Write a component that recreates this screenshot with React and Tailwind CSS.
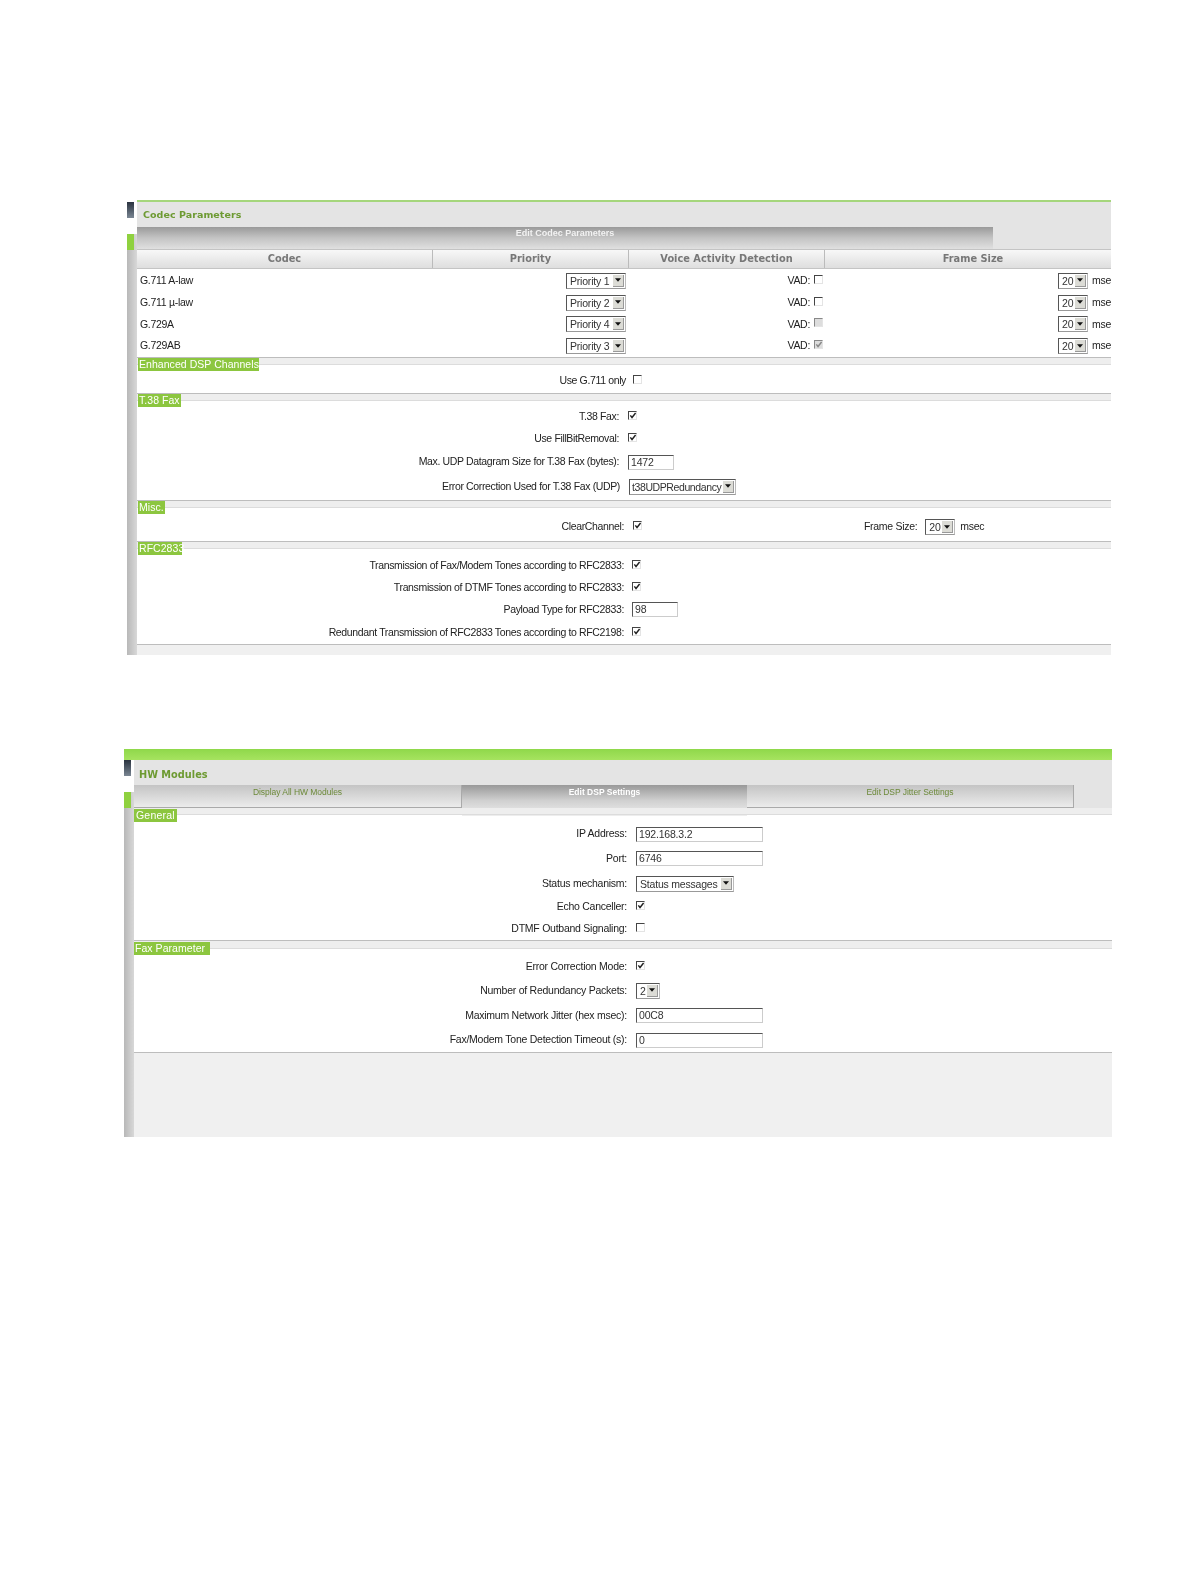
const sans = "font-['Liberation_Sans',Arial,sans-serif]";

function Check({ checked = false, disabled = false }) {
  return (
    <span className={`relative inline-block w-[9px] h-[9px] shrink-0 -mt-[3px] border-t border-l ${disabled ? "border-[#888] bg-[#ddd]" : "border-[#444] bg-white"} border-r border-b border-r-[#e4e4e4] border-b-[#e4e4e4]`}>
      {checked && (
        <svg viewBox="0 0 9 9" className="absolute left-0 top-0 w-[8px] h-[8px]">
          <path d="M1.5 3.8 L3.4 6.2 L7.4 1.2" fill="none" stroke={disabled ? "#888" : "#222"} strokeWidth="1.6" />
        </svg>
      )}
    </span>
  );
}

function Select({ value, className = "", textClass = "pl-[3px] tracking-[-0.2px]" }) {
  return (
    <span className={`inline-flex items-stretch h-[16px] shrink-0 border-t border-l border-[#555] border-r border-b border-r-[#bbb] border-b-[#999] bg-white ${className}`}>
      <span className={`flex-1 text-[10.5px] leading-[14px] text-[#333] whitespace-nowrap ${textClass}`}>{value}</span>
      <span className="flex items-center justify-center w-[11px] shrink-0 my-[1px] mr-[1px] bg-[#dcdcd6] border-r border-b border-[#999]">
        <svg viewBox="0 0 7 4" className="w-[6px] h-[4px]"><path d="M0 0 H7 L3.5 4 Z" fill="#111" /></svg>
      </span>
    </span>
  );
}

function Input({ value, className = "" }) {
  return (
    <span className={`inline-block h-[15px] shrink-0 border-t border-l border-[#555] border-r border-b border-r-[#ccc] border-b-[#ccc] bg-white pl-[2px] text-[10.5px] tracking-[-0.2px] leading-[13px] text-[#333] ${className}`}>
      {value}
    </span>
  );
}

function Field({ label, h, labelW, gap = "gap-[9px]", text = "text-[10.5px] tracking-[-0.25px]", children }) {
  return (
    <div className={`flex items-center ${gap} ${h}`}>
      <span className={`${labelW} text-right ${text} text-[#222] whitespace-nowrap`}>{label}</span>
      {children}
    </div>
  );
}

function Section({ label, labelW, labelPos = "left-[1px] top-0", barH = "h-[8px]", children }) {
  return (
    <section>
      <div className={`relative ${barH} bg-[#eeeeee] border-t border-t-[#bdbdbd] border-b border-b-[#dcdcdc]`}>
        <span className={`absolute ${labelPos} ${labelW} h-[13px] bg-[#8cc63f] pl-[1px] text-[10.5px] leading-[13px] text-white tracking-[0.05px] whitespace-nowrap z-10`}>{label}</span>
      </div>
      {children}
    </section>
  );
}

function Rail({ railW, darkW }) {
  return (
    <div className={`${railW} shrink-0 flex flex-col bg-gradient-to-r from-[#b8b8b8] to-[#d8d8d8]`}>
      <div className="h-[16px] shrink-0 bg-white">
        <div className={`${darkW} h-full bg-gradient-to-b from-[#2b3440] to-[#7b8794]`} />
      </div>
      <div className="h-[16px] shrink-0 bg-white" />
      <div className={`h-[16px] ${darkW} shrink-0 bg-[#8fd13f]`} />
    </div>
  );
}

const codecs = [
  ["G.711 A-law", "Priority 1", false, false],
  ["G.711 µ-law", "Priority 2", false, false],
  ["G.729A", "Priority 4", false, true],
  ["G.729AB", "Priority 3", true, true],
];

function CodecPanel() {
  const lw = "w-[482px]";
  const t = "text-[10.5px] tracking-[-0.36px]";
  return (
    <div className="ml-[127px] w-[984px] flex flex-col">
      <div className="h-[2px] bg-[#a5d67c] ml-[10px]" />
      <div className="flex h-[453px]">
        <Rail railW="w-[10px]" darkW="w-[7px]" />
        <div className="flex-1 flex flex-col min-w-0">
          <div className="h-[25px] bg-[#e4e4e4] flex items-center pl-[6px] pt-[2px]">
            <h1 className="font-['DejaVu_Sans',sans-serif] font-bold text-[9.5px] tracking-[0.05px] text-[#6d9a32]">Codec Parameters</h1>
          </div>
          <div className="h-[22px] bg-[#e4e4e4] shrink-0">
            <div className="w-[856px] h-full bg-gradient-to-b from-[#9a9a9a] via-[#c4c4c4] to-[#e0e0e0] flex justify-center">
              <span className="text-[9px] font-bold text-[#f2f2f2]">Edit Codec Parameters</span>
            </div>
          </div>
          <div className="grid grid-cols-[296px_196px_196px_1fr] h-[20px] border-t border-b border-[#c4c4c4] bg-gradient-to-b from-[#f8f8f8] to-[#dedede] font-['DejaVu_Sans',sans-serif] font-bold text-[9.8px] text-[#777] text-center leading-[18px]">
            <div className="border-r border-[#bbb]">Codec</div>
            <div className="border-r border-[#bbb]">Priority</div>
            <div className="border-r border-[#bbb]">Voice Activity Detection</div>
            <div className="pl-[10px]">Frame Size</div>
          </div>
          <div className="flex flex-col h-[88px] pt-[1px] bg-white text-[10.5px] tracking-[-0.3px] text-[#222]">
            {codecs.map(([name, pr, chk, dis]) => (
              <div key={name} className="grid grid-cols-[296px_196px_196px_1fr] h-[22px] items-center">
                <span className="pl-[3px]">{name}</span>
                <div className="flex justify-end pr-[3px]"><Select value={pr} className="w-[60px]" /></div>
                <div className="flex justify-end items-center gap-[4px] pr-[2px]"><span>VAD:</span><Check checked={chk} disabled={dis} /></div>
                <div className="flex justify-end items-center gap-[4px]">
                  <Select value="20" className="w-[30px]" />
                  <span className="w-[19px] whitespace-nowrap">mse</span>
                </div>
              </div>
            ))}
          </div>
          <Section label="Enhanced DSP Channels" labelW="w-[121px]">
            <div className="bg-white h-[28px] pt-[5px]">
              <Field label="Use G.711 only" h="h-[22px]" labelW="w-[489px]" gap="gap-[7px]" text={t}><Check /></Field>
            </div>
          </Section>
          <Section label="T.38 Fax" labelW="w-[43px]">
            <div className="bg-white h-[99px] pt-[5px]">
              <Field label="T.38 Fax:" h="h-[22px]" labelW={lw} text={t}><Check checked /></Field>
              <Field label="Use FillBitRemoval:" h="h-[22px]" labelW={lw} text={t}><Check checked /></Field>
              <Field label="Max. UDP Datagram Size for T.38 Fax (bytes):" h="h-[24px]" labelW={lw} text={t}><Input value="1472" className="w-[46px]" /></Field>
              <Field label="Error Correction Used for T.38 Fax (UDP)" h="h-[25px]" labelW="w-[483px]" text={t}><Select value="t38UDPRedundancy" className="w-[107px]" textClass="pl-[2px] tracking-[-0.4px]" /></Field>
            </div>
          </Section>
          <Section label="Misc." labelW="w-[27px]">
            <div className="bg-white h-[33px] pt-[5px] flex">
              <Field label="ClearChannel:" h="h-[28px]" labelW="w-[487px]" text={t}><Check checked /></Field>
              <div className="ml-[222px] flex items-center h-[28px] text-[10.5px] tracking-[-0.3px] text-[#222]">
                <span>Frame Size:</span>
                <Select value="20" className="w-[30px] ml-[8px]" />
                <span className="ml-[5px]">msec</span>
              </div>
            </div>
          </Section>
          <Section label="RFC2833" labelW="w-[44px]">
            <div className="bg-white h-[95px] pt-[6px]">
              <Field label="Transmission of Fax/Modem Tones according to RFC2833:" h="h-[22px]" labelW="w-[487px]" gap="gap-[8px]" text={t}><Check checked /></Field>
              <Field label="Transmission of DTMF Tones according to RFC2833:" h="h-[21px]" labelW="w-[487px]" gap="gap-[8px]" text={t}><Check checked /></Field>
              <Field label="Payload Type for RFC2833:" h="h-[23px]" labelW="w-[487px]" gap="gap-[8px]" text={t}><Input value="98" className="w-[46px]" /></Field>
              <Field label="Redundant Transmission of RFC2833 Tones according to RFC2198:" h="h-[23px]" labelW="w-[487px]" gap="gap-[8px]" text={t}><Check checked /></Field>
            </div>
          </Section>
          <div className="flex-1 bg-[#f0f0f0] border-t border-[#bdbdbd]" />
        </div>
      </div>
    </div>
  );
}

function Tab({ w, active, children }) {
  return (
    <div className={`${w} shrink-0 text-center text-[8.5px] ${active
      ? "h-[31px] bg-gradient-to-b from-[#999] via-[#d0d0d0] to-[#eee] text-white font-bold"
      : "h-[23px] bg-gradient-to-b from-[#c4c4c4] to-[#ececec] border-r border-b border-[#aaa] text-[#6d8a3a] tracking-[-0.05px]"} leading-[14px]`}>
      {children}
    </div>
  );
}

function HwPanel() {
  const lw = "w-[493px]";
  return (
    <div className="ml-[124px] mt-[94px] w-[988px] flex flex-col">
      <div className="h-[11px] bg-gradient-to-b from-[#8fd84a] to-[#a6e35f]" />
      <div className="flex h-[377px]">
        <Rail railW="w-[10px]" darkW="w-[7px]" />
        <div className="flex-1 flex flex-col min-w-0">
          <div className="h-[25px] bg-[#e4e4e4] flex items-center pl-[5px] pt-[5px]">
            <h1 className="font-['DejaVu_Sans',sans-serif] font-bold text-[9.75px] tracking-[0.02px] text-[#6d9a32]">HW Modules</h1>
          </div>
          <div className="h-[23px] bg-[#e4e4e4] flex shrink-0 relative z-0">
            <Tab w="w-[328px]">Display All HW Modules</Tab>
            <Tab w="w-[285px]" active>Edit DSP Settings</Tab>
            <Tab w="w-[327px]">Edit DSP Jitter Settings</Tab>
          </div>
          <section>
            <div className="relative h-[7px] bg-[#eeeeee] border-b border-[#dcdcdc]">
              <span className="absolute left-0 top-[1px] w-[43px] h-[13px] bg-[#8cc63f] pl-[2px] text-[10.5px] leading-[13px] text-white tracking-[0.2px] z-10">General</span>
            </div>
            <div className="bg-white h-[125px] pt-[7px]">
              <Field label="IP Address:" h="h-[24px]" labelW={lw}><Input value="192.168.3.2" className="w-[127px]" /></Field>
              <Field label="Port:" h="h-[25px]" labelW={lw}><Input value="6746" className="w-[127px]" /></Field>
              <Field label="Status mechanism:" h="h-[25px]" labelW={lw}><Select value="Status messages" className="w-[98px]" /></Field>
              <Field label="Echo Canceller:" h="h-[22px]" labelW={lw}><Check checked /></Field>
              <Field label="DTMF Outband Signaling:" h="h-[22px]" labelW={lw}><Check /></Field>
            </div>
          </section>
          <Section label="Fax Parameter" labelW="w-[76px]" labelPos="left-0 top-[1px]" barH="h-[9px]">
            <div className="bg-white h-[103px] pt-[6px]">
              <Field label="Error Correction Mode:" h="h-[23px]" labelW={lw}><Check checked /></Field>
              <Field label="Number of Redundancy Packets:" h="h-[25px]" labelW={lw}><Select value="2" className="w-[24px]" /></Field>
              <Field label="Maximum Network Jitter (hex msec):" h="h-[25px]" labelW={lw}><Input value="00C8" className="w-[127px]" /></Field>
              <Field label="Fax/Modem Tone Detection Timeout (s):" h="h-[24px]" labelW={lw}><Input value="0" className="w-[127px]" /></Field>
            </div>
          </Section>
          <div className="flex-1 bg-[#f0f0f0] border-t border-[#bdbdbd]" />
        </div>
      </div>
    </div>
  );
}

export default function App() {
  return (
    <div className={`${sans} w-[1190px] h-[1582px] bg-white pt-[200px] overflow-hidden blur-[0.3px]`}>
      <CodecPanel />
      <HwPanel />
    </div>
  );
}
